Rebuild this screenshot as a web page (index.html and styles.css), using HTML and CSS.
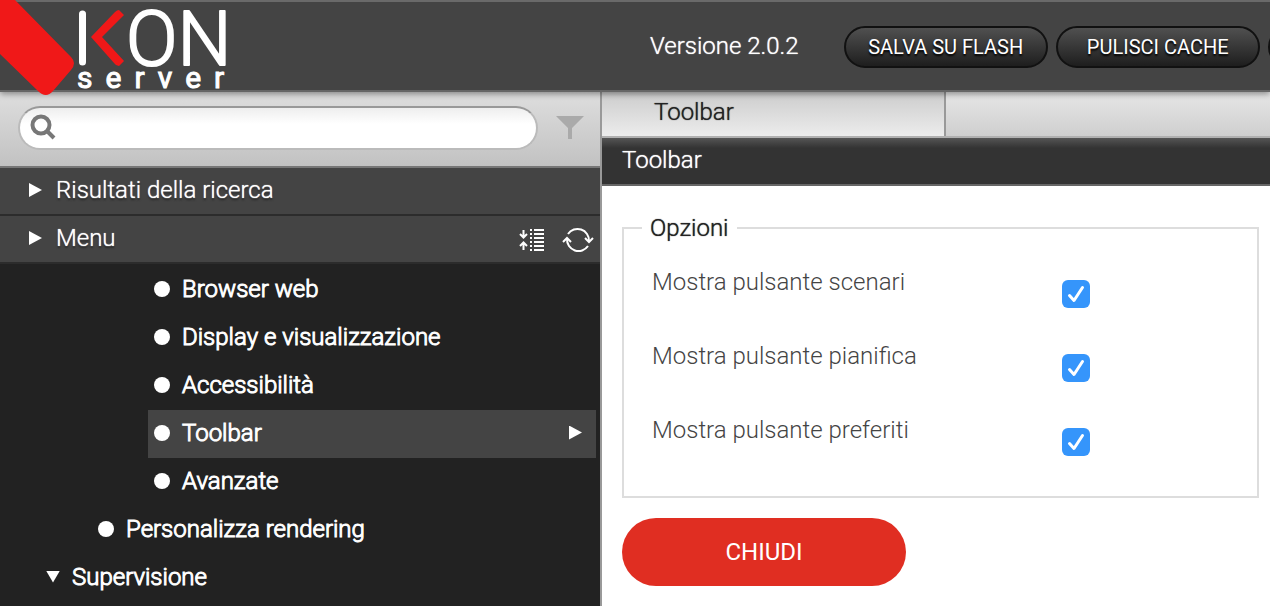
FILE: index.html
```
<!DOCTYPE html>
<html lang="it">
<head>
  <meta charset="UTF-8">
  <title>IKON Server</title>
  <link rel="stylesheet" href="styles.css">
</head>
<body>

  <!-- Barra superiore -->
  <header class="topbar">
    <svg class="logo" viewBox="0 0 240 98" role="img" aria-label="IKON server">
      <path class="logo-red" d="M0 0H15L71 57Q77 63 71 70L53 91Q46 99 38 91L0 54Z"/>
      <path class="logo-bar" d="M82.500 14V62"/>
      <path class="logo-red" d="M119 10L124 15L102 37L124 61L119 66Q116 66 114 63L91 37L115 12Q117 10 119 10Z"/>
      <text class="logo-name" x="126" y="65">ON</text>
      <text class="logo-sub" x="77" y="88">server</text>
    </svg>
    <span class="version">Versione 2.0.2</span>
    <div class="actions">
      <button class="pill">SALVA SU FLASH</button>
      <button class="pill">PULISCI CACHE</button>
      <button class="pill" aria-label="Altro"></button>
    </div>
  </header>

  <div class="layout">

    <!-- Menu laterale -->
    <aside class="sidebar">
      <form class="search">
        <div class="search-box">
          <svg class="search-icon" viewBox="0 0 28 28">
            <circle cx="11" cy="11" r="8.500"/>
            <path d="M17 17L24 24"/>
          </svg>
          <input type="text" class="search-input" aria-label="Cerca">
        </div>
        <svg class="filter-icon" viewBox="0 0 28 24">
          <path d="M0 0H28L16 12V23H12V12Z"/>
        </svg>
      </form>

      <div class="section">
        <span class="arrow"></span>
        <span>Risultati della ricerca</span>
      </div>
      <div class="section">
        <span class="arrow"></span>
        <span>Menu</span>
        <div class="section-tools">
          <svg class="tool" width="26" height="24" viewBox="0 0 26 24">
            <path d="M4.500 2V9M1 6L4.500 9.500L8 6M4.500 22V15M1 18L4.500 14.500L8 18"/>
            <path class="tool-lines" d="M11 2H13M11 6H13M11 10H13M11 14H13M11 18H13M11 22H13M15 2H25M15 6H25M15 10H25M15 14H25M15 18H25M15 22H25"/>
          </svg>
          <svg class="tool" width="32" height="26" viewBox="0 0 32 26">
            <path d="M6 7A11.500 11.500 0 0 1 27 14M26 19A11.500 11.500 0 0 1 5 12"/>
            <path d="M23 11L27 15L31 11M1 15L5 11L9 15"/>
          </svg>
        </div>
      </div>

      <ul class="tree">
        <li class="node level-3"><span class="dot"></span>Browser web</li>
        <li class="node level-3"><span class="dot"></span>Display e visualizzazione</li>
        <li class="node level-3"><span class="dot"></span>Accessibilità</li>
        <li class="node level-3 selected"><span class="dot"></span>Toolbar<span class="arrow"></span></li>
        <li class="node level-3"><span class="dot"></span>Avanzate</li>
        <li class="node level-2"><span class="dot"></span>Personalizza rendering</li>
        <li class="node level-1"><span class="arrow-down"></span>Supervisione</li>
      </ul>
    </aside>

    <!-- Contenuto -->
    <main class="content">
      <div class="tabs">
        <div class="tab">Toolbar</div>
      </div>
      <h1 class="title">Toolbar</h1>

      <form class="panel">
        <fieldset class="options">
          <legend>Opzioni</legend>
          <div class="option">
            <label for="scenari">Mostra pulsante scenari</label>
            <input type="checkbox" id="scenari" checked>
          </div>
          <div class="option">
            <label for="pianifica">Mostra pulsante pianifica</label>
            <input type="checkbox" id="pianifica" checked>
          </div>
          <div class="option">
            <label for="preferiti">Mostra pulsante preferiti</label>
            <input type="checkbox" id="preferiti" checked>
          </div>
        </fieldset>
        <button type="button" class="close">CHIUDI</button>
      </form>
    </main>
  </div>

</body>
</html>
```
FILE: styles.css
```
* {
  box-sizing: border-box;
}

body {
  margin: 0;
  height: 100vh;
  display: flex;
  flex-direction: column;
  overflow: hidden;
  font-family: Roboto, "Liberation Sans", sans-serif;
  font-size: 24px;
  font-weight: 300;
  line-height: 28px;
  color: #222;
  background: #fff;
}

button,
input {
  font: inherit;
}

/* Barra superiore */
.topbar {
  position: relative;
  z-index: 1;
  flex: none;
  display: flex;
  align-items: center;
  height: 92px;
  border-top: 2px solid #6a6a6a;
  border-bottom: 2px solid #666;
  background: #444;
  color: #fff;
  box-shadow: 0 2px 6px rgba(0, 0, 0, 0.4);
}

.logo {
  position: absolute;
  top: -2px;
  left: 0;
  width: 240px;
  height: 98px;
}

.logo-red {
  fill: #f01818;
}

.logo-bar {
  stroke: #fff;
  stroke-width: 7;
  stroke-linecap: round;
}

.logo-name {
  fill: #fff;
  stroke: #fff;
  stroke-width: 2;
  stroke-linejoin: round;
  font-size: 76px;
}

.logo-sub {
  fill: #fff;
  stroke: #fff;
  font-size: 30px;
  font-weight: 400;
  letter-spacing: 13px;
}

.version {
  margin-left: 650px;
  white-space: nowrap;
  text-shadow: 0 0 1px #fff;
}

.actions {
  flex: 1;
  display: flex;
  gap: 8px;
  min-width: 0;
  margin-left: 45px;
  padding-top: 2px;
  overflow: hidden;
}

.pill {
  flex: none;
  width: 204px;
  height: 42px;
  padding: 0;
  border: 2px solid #111;
  border-radius: 21px;
  background: linear-gradient(#505050, #1e1e1e);
  color: #fff;
  font-size: 20px;
  font-weight: 400;
  text-shadow: 0 2px 2px #000;
}

.layout {
  flex: 1;
  display: flex;
  min-height: 0;
}

/* Menu laterale */
.sidebar {
  flex: none;
  width: 602px;
  border-right: 2px solid #999;
  background: #222;
  color: #fff;
}

.search {
  display: flex;
  align-items: center;
  gap: 18px;
  height: 76px;
  padding: 0 16px 2px 18px;
  border-bottom: 2px solid #777;
  background: linear-gradient(#dedede, #c2c2c2);
}

.search-box {
  flex: 1;
  display: flex;
  align-items: center;
  height: 44px;
  padding: 0 10px;
  border: 2px solid #bbb;
  border-top-color: #999;
  border-radius: 22px;
  background: linear-gradient(#eee, #fff 40%);
}

.search-icon {
  flex: none;
  width: 28px;
  height: 28px;
  fill: none;
  stroke: #777;
  stroke-width: 4;
}

.search-input {
  flex: 1;
  min-width: 0;
  border: 0;
  outline: 0;
  background: none;
}

.filter-icon {
  width: 28px;
  height: 24px;
  fill: #aaa;
}

.section {
  display: flex;
  align-items: center;
  height: 48px;
  padding: 0 6px 2px 29px;
  border-bottom: 2px solid #2c2c2c;
  background: #444;
  text-shadow: 0 0 1px #fff, 0 2px 2px #222;
}

.arrow {
  width: 13px;
  height: 14px;
  margin-right: 14px;
  background: #fff;
  clip-path: polygon(0 0, 100% 50%, 0 100%);
}

.arrow-down {
  width: 14px;
  height: 12px;
  margin-right: 12px;
  background: #fff;
  clip-path: polygon(0 0, 100% 0, 50% 100%);
}

.section-tools {
  display: flex;
  align-items: center;
  gap: 17px;
  margin-left: auto;
  padding-top: 3px;
}

.tool {
  fill: none;
  stroke: #fff;
  stroke-width: 2;
}

.tool-lines {
  shape-rendering: crispEdges;
}

.tree {
  margin: 0;
  padding: 2px 4px 0 0;
  list-style: none;
  -webkit-text-stroke: 1px #fff;
}

.node {
  display: flex;
  align-items: center;
  height: 48px;
  padding: 0 0 3px 6px;
}

.level-3 {
  margin-left: 148px;
}

.level-2 {
  margin-left: 92px;
}

.level-1 {
  margin-left: 40px;
}

.dot {
  width: 16px;
  height: 16px;
  margin-right: 12px;
  border-radius: 50%;
  background: #fff;
}

.selected {
  background: #444;
}

.selected .arrow {
  margin-left: auto;
}

/* Contenuto */
.content {
  flex: 1;
  min-width: 0;
}

.tabs {
  height: 46px;
  border-bottom: 2px solid #b0b0b0;
  background: linear-gradient(#e6e6e6, #cfcfcf);
}

.tab {
  width: 344px;
  height: 44px;
  padding: 6px 52px;
  border-right: 2px solid #999;
  background: linear-gradient(#ccc, #ececec);
  text-shadow: 0 0 1px #222;
}

.title {
  height: 48px;
  margin: 0;
  padding: 8px 20px;
  border-bottom: 2px solid #666;
  background: linear-gradient(#555, #333 10px);
  color: #fff;
  font-size: 24px;
  font-weight: 300;
  text-shadow: 0 0 1px #fff;
}

.panel {
  padding: 28px 11px 0 20px;
}

.options {
  margin: 0 0 20px;
  padding: 26px 28px 40px;
  border: 2px solid #ddd;
}

.options legend {
  margin-left: -10px;
  padding: 0 8px;
  text-shadow: 0 0 1px #222;
}

.option {
  display: flex;
  color: #444;
}

.option + .option {
  margin-top: 34px;
}

.option label {
  width: 410px;
}

.option input {
  appearance: none;
  width: 28px;
  height: 28px;
  margin: 12px 0 0;
  border-radius: 6px;
  background: #3595fb url("data:image/svg+xml,%3Csvg xmlns='http://www.w3.org/2000/svg' viewBox='0 0 28 28'%3E%3Cpath d='M7.500 15.500L12 20.500L20.500 7.500' fill='none' stroke='white' stroke-width='3' stroke-linecap='round' stroke-linejoin='round'/%3E%3C/svg%3E");
}

.close {
  width: 284px;
  height: 68px;
  border: 0;
  border-radius: 34px;
  background: #e02e22;
  color: #fff;
  font-weight: 400;
}
```
